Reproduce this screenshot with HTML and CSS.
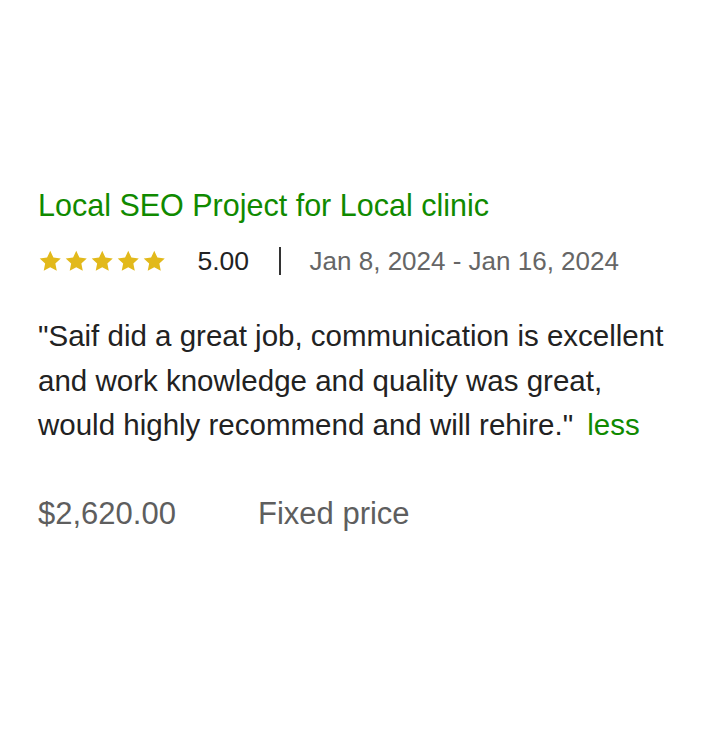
FILE: index.html
```html
<!DOCTYPE html>
<html>
<head>
<meta charset="utf-8">
<link rel="stylesheet" href="styles.css">
</head>
<body>
<div class="card">
  <h2 class="title">Local SEO Project for Local clinic</h2>
  <div class="meta">
    <div class="stars">
      <svg viewBox="0 0 24 24" class="star"><path d="M12 1.8l3.1 6.6 7.2.9-5.3 5 1.4 7.1L12 17.9l-6.4 3.5 1.4-7.1-5.3-5 7.2-.9z"/></svg>
      <svg viewBox="0 0 24 24" class="star"><path d="M12 1.8l3.1 6.6 7.2.9-5.3 5 1.4 7.1L12 17.9l-6.4 3.5 1.4-7.1-5.3-5 7.2-.9z"/></svg>
      <svg viewBox="0 0 24 24" class="star"><path d="M12 1.8l3.1 6.6 7.2.9-5.3 5 1.4 7.1L12 17.9l-6.4 3.5 1.4-7.1-5.3-5 7.2-.9z"/></svg>
      <svg viewBox="0 0 24 24" class="star"><path d="M12 1.8l3.1 6.6 7.2.9-5.3 5 1.4 7.1L12 17.9l-6.4 3.5 1.4-7.1-5.3-5 7.2-.9z"/></svg>
      <svg viewBox="0 0 24 24" class="star"><path d="M12 1.8l3.1 6.6 7.2.9-5.3 5 1.4 7.1L12 17.9l-6.4 3.5 1.4-7.1-5.3-5 7.2-.9z"/></svg>
    </div>
    <span class="score">5.00</span>
    <span class="divider"></span>
    <span class="dates">Jan 8, 2024 - Jan 16, 2024</span>
  </div>
  <p class="review"><span class="quote">"Saif did a great job, communication is excellent and work knowledge and quality was great, would highly recommend and will rehire."</span><a class="less">less</a></p>
  <div class="price-row">
    <span class="price">$2,620.00</span>
    <span class="type">Fixed price</span>
  </div>
</div>
</body>
</html>
```
FILE: styles.css
```css
html, body {
  margin: 0;
  padding: 0;
  background: #fff;
}
body {
  font-family: "Liberation Sans", Arial, sans-serif;
  color: #222;
}
.card {
  padding: 186px 0 0 38px;
}
.title {
  margin: 0;
  font-weight: normal;
  font-size: 30.5px;
  line-height: 38px;
  color: #108a00;
}
.meta {
  display: flex;
  align-items: center;
  margin-top: 22px;
  height: 30px;
}
.stars {
  display: flex;
  gap: 1.5px;
}
.star {
  width: 24.5px;
  height: 24.5px;
  fill: #e2b91b;
}
.score {
  margin-left: 31px;
  font-size: 26.5px;
  color: #222;
}
.divider {
  width: 1.5px;
  height: 28px;
  background: #333;
  margin: 0 29px 0 30px;
}
.dates {
  font-size: 26px;
  color: #666;
}
.review {
  margin: 38px 0 0;
  max-width: 632px;
  font-size: 29.5px;
  line-height: 44.5px;
  color: #222;
}
.quote {
  color: #222;
}
.less {
  margin-left: 14px;
  color: #108a00;
}
.price-row {
  display: flex;
  margin-top: 48px;
  font-size: 31px;
  color: #5e5e5e;
}
.price {
  width: 220px;
}
```
